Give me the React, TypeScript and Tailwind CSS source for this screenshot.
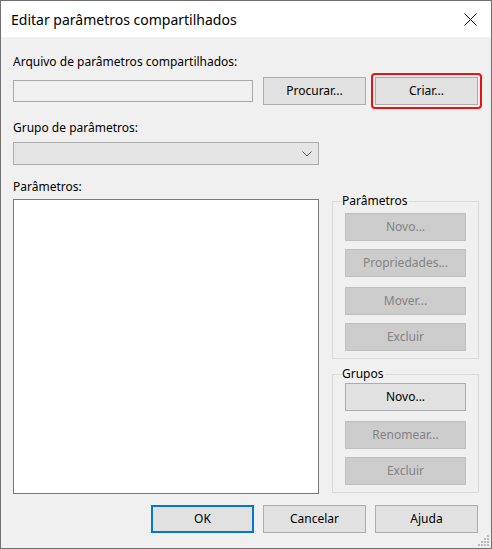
const font = { fontFamily: '"Segoe UI", "Noto Sans", sans-serif' };

function Btn({ label, disabled, className = '' }: { label: string; disabled?: boolean; className?: string }) {
  return (
    <button
      disabled={disabled}
      className={`flex h-[28px] items-center justify-center border text-[12px] ${
        disabled ? 'border-[#bfbfbf] bg-[#cccccc] text-[#838383]' : 'border-[#adadad] bg-[#e1e1e1] text-black'
      } ${className}`}
    >
      {label}
    </button>
  );
}

function GroupBox({ title, children }: { title: string; children: React.ReactNode }) {
  return (
    <fieldset className="border border-[#dcdcdc] px-[12px] pb-[7px]">
      <legend className="-ml-[4px] px-[1px] text-[12px] leading-[16px] text-black">{title}</legend>
      {children}
    </fieldset>
  );
}

export default function App() {
  return (
    <div style={font} className="relative flex h-[549px] w-[492px] flex-col border border-[#707070] bg-[#f0f0f0] text-black">
      {/* Title bar */}
      <div className="flex h-[36px] shrink-0 items-center justify-between bg-white pl-[10px] pr-[14px]">
        <span className="text-[14px]">Editar parâmetros compartilhados</span>
        <svg width="13" height="13" viewBox="0 0 13 13" className="mt-[1px]">
          <path d="M0.5 0.5L12.5 12.5M12.5 0.5L0.5 12.5" stroke="#000" strokeWidth="1" />
        </svg>
      </div>

      {/* Body */}
      <div className="flex flex-col px-[12px]">
        <label className="mt-[17px] text-[12px] leading-[16px]">Arquivo de parâmetros compartilhados:</label>
        <div className="mt-[3px] flex h-[36px] items-center">
          <div className="h-[22px] w-[240px] border border-[#a9a9a9] bg-[#f0f0f0]" />
          <Btn label="Procurar..." className="ml-[10px] w-[103px]" />
          <div className="relative ml-[9px]">
            <Btn label="Criar..." className="w-[103px]" />
            <span className="pointer-events-none absolute -inset-[4px] rounded-[4px] border-2 border-[#ee1111]" />
          </div>
        </div>

        <label className="mt-[11px] text-[12px] leading-[16px]">Grupo de parâmetros:</label>
        <div className="mt-[6px] flex h-[23px] w-[306px] items-center justify-end border border-[#adadad] bg-[#e5e5e5] pr-[6px]">
          <svg width="10" height="6" viewBox="0 0 10 6">
            <path d="M0.5 0.5L5 5L9.5 0.5" fill="none" stroke="#555" strokeWidth="1" />
          </svg>
        </div>

        <div className="mt-[14px] flex">
          <div className="flex flex-col">
            <label className="text-[12px] leading-[16px]">Parâmetros:</label>
            <div className="mt-[4px] h-[295px] w-[306px] border border-[#7a7a7a] bg-white" />
          </div>

          <div className="ml-[13px] mt-[14px] flex w-[147px] flex-col">
            <GroupBox title="Parâmetros">
              <Btn label="Novo..." disabled className="mt-[4px] w-full" />
              <Btn label="Propriedades..." disabled className="mt-[8px] w-full" />
              <Btn label="Mover..." disabled className="mt-[10px] w-full" />
              <Btn label="Excluir" disabled className="mt-[8px] w-full" />
            </GroupBox>
            <div className="mt-[7px]">
              <GroupBox title="Grupos">
                <Btn label="Novo..." className="mt-[1px] w-full" />
                <Btn label="Renomear..." disabled className="mt-[10px] w-full" />
                <Btn label="Excluir" disabled className="mt-[8px] w-full" />
              </GroupBox>
            </div>
          </div>
        </div>

        <div className="mt-[11px] flex justify-end pr-[1px]">
          <button className="flex h-[28px] w-[103px] items-center justify-center border-2 border-[#0078d7] bg-[#e1e1e1] text-[12px]">
            OK
          </button>
          <Btn label="Cancelar" className="ml-[9px] w-[103px]" />
          <Btn label="Ajuda" className="ml-[9px] w-[103px]" />
        </div>
      </div>

      {/* Resize grip */}
      <svg width="12" height="12" viewBox="0 0 12 12" className="absolute bottom-[1px] right-[1px]">
        <g fill="#b9b9b9">
          <rect x="9" y="0" width="2" height="2" />
          <rect x="6" y="3" width="2" height="2" />
          <rect x="9" y="3" width="2" height="2" />
          <rect x="3" y="6" width="2" height="2" />
          <rect x="6" y="6" width="2" height="2" />
          <rect x="9" y="6" width="2" height="2" />
          <rect x="0" y="9" width="2" height="2" />
          <rect x="3" y="9" width="2" height="2" />
          <rect x="6" y="9" width="2" height="2" />
          <rect x="9" y="9" width="2" height="2" />
        </g>
      </svg>
    </div>
  );
}
